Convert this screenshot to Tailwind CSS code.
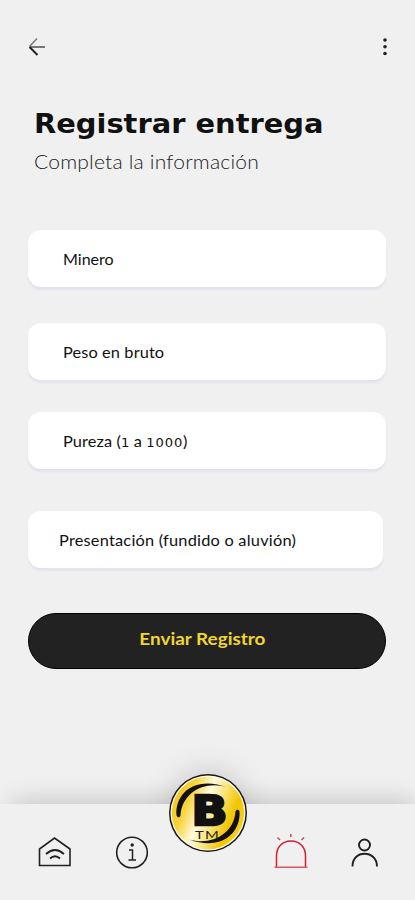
<!DOCTYPE html>
<html lang="es">
<head>
  <meta charset="UTF-8">
  <meta name="viewport" content="width=device-width, initial-scale=1.0">
  <title>Registrar entrega</title>
  <script src="https://cdn.jsdelivr.net/npm/@tailwindcss/browser@4"></script>
</head>
<body class="bg-[#f0f0f0] h-screen flex flex-col overflow-hidden font-['Lato',sans-serif] text-[#222]">
  <!-- Barra superior -->
  <header class="h-[93px] pl-7 pr-6 flex justify-between items-center">
    <button aria-label="Volver">
      <svg class="w-[18px] h-5" viewBox="0 0 18 20" fill="none" stroke-width="1.6">
        <path d="M17 10H2" stroke="#777" stroke-width="2"/>
        <path d="M9 1.5 1.5 9.5" stroke="#777"/>
        <path d="M1.5 10 9.5 18" stroke="#222" stroke-width="1.9"/>
      </svg>
    </button>
    <button aria-label="Opciones">
      <svg class="w-3 h-5" viewBox="0 0 12 20" fill="#222">
        <circle cx="6" cy="3" r="1.8"/>
        <circle cx="6" cy="9.7" r="1.8"/>
        <circle cx="6" cy="16.5" r="1.8"/>
      </svg>
    </button>
  </header>

  <main class="flex-1 px-7 pt-[13px]">
    <h1 class="ml-1.5 origin-left scale-x-[1.07] text-[27px] leading-9 font-bold font-['DejaVu_Sans',sans-serif] text-[#111] whitespace-nowrap">Registrar entrega</h1>
    <p class="ml-1.5 mt-[5px] origin-left scale-x-[1.05] text-[20px] leading-7 font-light tracking-[0.2px] text-[#222] whitespace-nowrap">Completa la información</p>

    <form class="mt-[55px] flex flex-col text-[15px] text-[#111]">
      <label class="h-[57px] w-[358px] pl-[35px] pt-px flex items-center bg-white rounded-[13px] shadow-[0_3px_2px_#e3e3ee]">
        <span class="origin-left scale-x-[1.07]">Minero</span>
      </label>
      <label class="mt-9 h-[57px] w-[358px] pl-[35px] pt-px flex items-center bg-white rounded-[13px] shadow-[0_3px_2px_#e3e3ee]">
        <span class="origin-left scale-x-[1.09] tracking-[0.1px]">Peso en bruto</span>
      </label>
      <label class="mt-8 h-[57px] w-[358px] pl-[35px] pt-px flex items-center bg-white rounded-[13px] shadow-[0_3px_2px_#e3e3ee]">
        <span class="origin-left scale-x-[1.09] tracking-[0.1px]">Pureza (<span class="text-[12px] font-['DejaVu_Sans',sans-serif]">1</span> a <span class="text-[12px] tracking-[0.8px] font-['DejaVu_Sans',sans-serif]">1000</span>)</span>
      </label>
      <label class="mt-[42px] h-[57px] w-[355px] pl-[31px] pt-px flex items-center bg-white rounded-[13px] shadow-[0_3px_2px_#e3e3ee]">
        <span class="origin-left scale-x-[1.09] tracking-[0.2px]">Presentación (fundido o aluvión)</span>
      </label>
      <button type="button" class="mt-[45px] h-[56px] w-[358px] pr-2.5 pb-1 rounded-full bg-[#222] border border-black text-[#f0d433] text-[17.5px] font-bold">
        <span class="inline-block scale-x-[1.08]">Enviar Registro</span>
      </button>
    </form>
  </main>

  <!-- Menú inferior -->
  <nav class="relative h-24 shrink-0">
    <div class="absolute -top-[70px] inset-x-0 h-[70px] overflow-hidden">
      <div class="absolute top-[70px] left-3 right-0 h-10 shadow-[0_-2px_26px_rgba(0,0,0,0.2)]"></div>
      <div class="absolute top-[43px] left-[172px] size-[72px] rounded-full shadow-[0_-4px_30px_2px_rgba(0,0,0,0.17)]"></div>
    </div>
    <div class="relative h-24 bg-[#f0f0f0] flex items-center">
      <a href="#" aria-label="Inicio" class="ml-[38px]">
        <svg class="w-[34px] h-9" viewBox="0 0 34 36" fill="none" stroke="#222" stroke-width="1.6">
          <path d="M1.5 31.5V15L16.5 4 32 15v16.5Z"/>
          <path d="M8 20q9-8 18 0M12 24.5q5-4.500 10 0" stroke-width="1.9"/>
        </svg>
      </a>
      <a href="#" aria-label="Información" class="ml-[43px]">
        <svg class="w-[34px] h-9" viewBox="0 0 34 36" fill="none" stroke="#222" stroke-width="1.6">
          <circle cx="17" cy="18.5" r="15.3"/>
          <path d="M14 16h3.500v10M13.5 26H21" stroke-width="1.5"/>
          <circle cx="17.2" cy="11" r="1.7" fill="#222" stroke="none"/>
        </svg>
      </a>
      <a href="#" aria-label="Alerta" class="ml-[125px]">
        <svg class="w-[34px] h-9" viewBox="0 0 34 36" fill="none" stroke="#d3202e" stroke-width="1.5">
          <path d="M2.5 33V22C2.5 13.5 8 7 17 7s14.5 6.5 14.5 15V33"/>
          <path d="M.5 33.3h33" stroke="#dc5660"/>
          <path d="M3.5 3.5 6 6M16.8 0v3M30 3.5 27.5 6" stroke="#cc4a60"/>
        </svg>
      </a>
      <a href="#" aria-label="Perfil" class="ml-[43px]">
        <svg class="w-[28px] h-9" viewBox="0 0 28 36" fill="none" stroke="#222" stroke-width="1.9">
          <circle cx="13.5" cy="11" r="5.5"/>
          <path d="M1.5 32.5C1.5 24 7 19.8 13.5 19.8S26 24 26 32.5"/>
        </svg>
      </a>
    </div>
    <a href="#" aria-label="BTM" class="absolute -top-[32px] left-[167px]">
      <svg class="size-[82px]" viewBox="0 0 82 82">
        <defs>
          <linearGradient id="oro" x1="0" y1="0.3" x2="1" y2="0.7">
            <stop offset="0" stop-color="#f8c51c"/>
            <stop offset="0.2" stop-color="#f8d338"/>
            <stop offset="0.42" stop-color="#fffbe0"/>
            <stop offset="0.6" stop-color="#f9e47a"/>
            <stop offset="0.8" stop-color="#f3c500"/>
            <stop offset="1" stop-color="#f5d228"/>
          </linearGradient>
        </defs>
        <circle cx="41" cy="41" r="39" fill="#191919"/>
        <circle cx="41" cy="41" r="37.5" fill="#fffbe8"/>
        <circle cx="41" cy="41" r="36.2" fill="url(#oro)"/>
        <path d="M9.500 43C8 21 28 3 61 15.500 38 8 15 20 13.500 43.500 13 46 10 46 9.500 43Z" fill="#111"/>
        <path d="M72.500 39.500C74 61 54 79.500 22 67.500 44 74 67 62 68.500 39.500 69 37 72 37 72.500 39.500Z" fill="#111"/>
        <text x="42.5" y="52.5" text-anchor="middle" font-family="DejaVu Sans" font-weight="bold" font-size="41" fill="#111" stroke="#111" stroke-width="2.5" textLength="36" lengthAdjust="spacingAndGlyphs">B</text>
        <text x="28" y="66.5" font-family="Lato" font-size="12" fill="#222" textLength="25" lengthAdjust="spacingAndGlyphs" letter-spacing="1">TM</text>
      </svg>
    </a>
  </nav>
</body>
</html>
